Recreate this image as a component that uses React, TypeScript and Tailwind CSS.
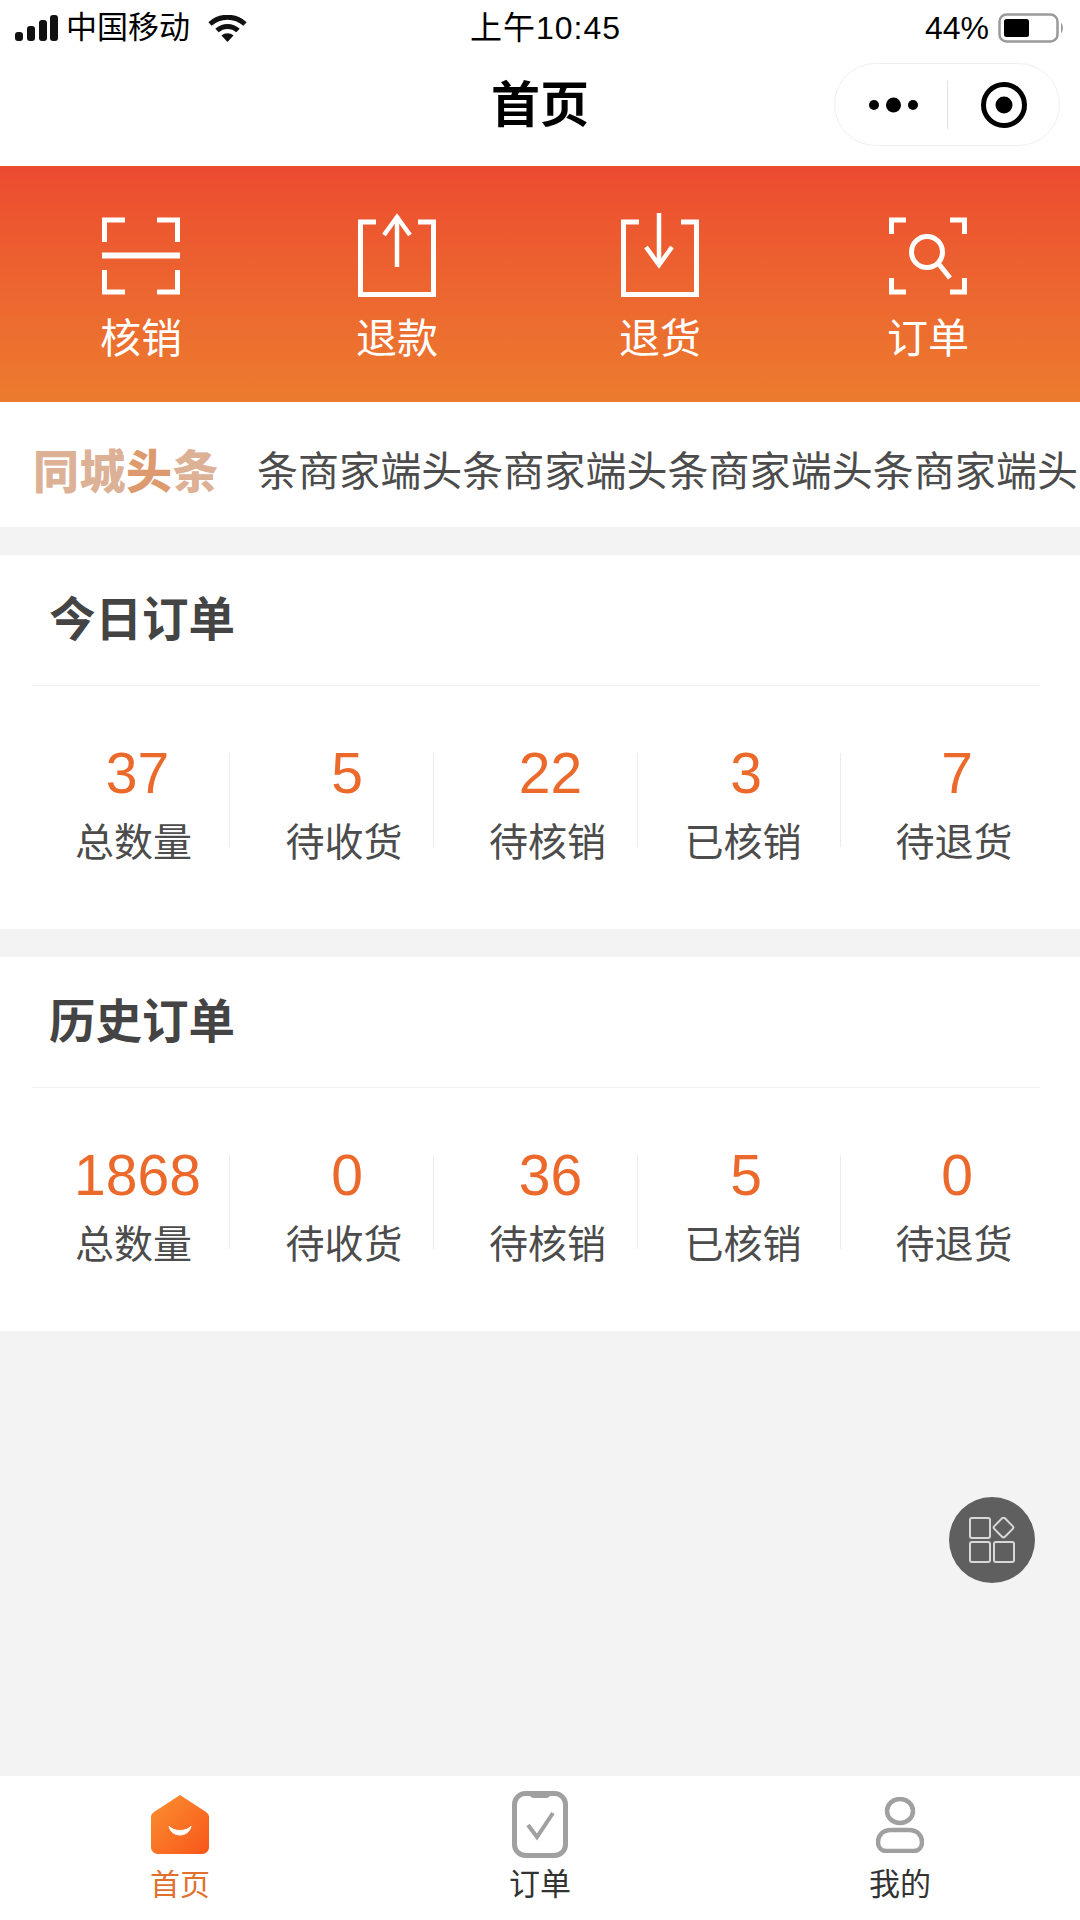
import React from "react";

const FONT = { fontFamily: '"Liberation Sans","Noto Sans CJK SC",sans-serif' };

function ScanIcon() {
  return (
    <svg className="mt-[4px]" width="78" height="78" viewBox="0 0 78 78" fill="none" stroke="#fff" strokeWidth="5">
      <path d="M23 3H2.5V25M55 3H75.5V25M23 75H2.5V53M55 75H75.5V53" />
      <path d="M0 38.5H78" strokeWidth="6" />
    </svg>
  );
}
function UploadIcon() {
  return (
    <svg width="78" height="84" viewBox="0 0 78 84" fill="none" stroke="#fff" strokeWidth="5">
      <path d="M18 9H2.5V81.5H75.5V9H60" />
      <path d="M39 54V3" strokeWidth="4.5" />
      <path d="M26 22L39 4L52 22" strokeWidth="4.5" />
    </svg>
  );
}
function DownloadIcon() {
  return (
    <svg width="78" height="84" viewBox="0 0 78 84" fill="none" stroke="#fff" strokeWidth="5">
      <path d="M18 9H2.5V81.5H75.5V9H60" />
      <path d="M38 0V52" strokeWidth="4.5" />
      <path d="M25 34L38 52L51 34" strokeWidth="4.5" />
    </svg>
  );
}
function SearchScanIcon() {
  return (
    <svg className="mt-[4px]" width="78" height="78" viewBox="0 0 78 78" fill="none" stroke="#fff" strokeWidth="5">
      <path d="M17 3H2.5V17M61 3H75.5V17M17 75H2.5V61M61 75H75.5V61" />
      <circle cx="38" cy="35" r="15.5" strokeWidth="5" />
      <path d="M49 46L61 61" strokeWidth="5" />
    </svg>
  );
}

const actions = [
  { label: "核销", icon: <ScanIcon />, cls: "ml-[102px]" },
  { label: "退款", icon: <UploadIcon />, cls: "ml-[178px]" },
  { label: "退货", icon: <DownloadIcon />, cls: "ml-[185px]" },
  { label: "订单", icon: <SearchScanIcon />, cls: "ml-[190px]" },
];

const cellCls = [
  "w-[198px] pl-[6px] border-r",
  "w-[204px] pl-[25px] border-r",
  "w-[204px] pl-[24px] border-r",
  "w-[203px] pl-[8px] border-r",
  "w-[200px] pl-[26px]",
];
const numCls = ["pl-[8px]", "pl-[6px]", "pl-[6px]", "pl-[6px]", "pl-[6px]"];

function Stats({ title, items }: { title: string; items: [string, string][] }) {
  return (
    <section className="bg-white h-[374px] pl-[32px] pr-[40px]">
      <div className="h-[131px] border-b border-[#f1f1f1] flex items-center pl-[17px]">
        <h2 className="text-[46.5px] leading-[50px] font-semibold text-[#444444]">{title}</h2>
      </div>
      <div className="flex w-[1009px] pt-[67px]">
        {items.map(([n, l], i) => (
          <div key={l + i} className={"h-[94px] shrink-0 flex flex-col items-center border-[#ececec] " + cellCls[i]}>
            <div className={"-mt-[8px] h-[56px] text-[57px] leading-[56px] text-[#ec692c] " + numCls[i]}>{n}</div>
            <div className="mt-[22px] text-[39px] leading-[40px] text-[#4c4c4c] whitespace-nowrap">{l}</div>
          </div>
        ))}
      </div>
    </section>
  );
}

export default function App() {
  return (
    <div style={FONT} className="relative w-[1080px] h-[1920px] bg-[#f3f3f3] flex flex-col overflow-hidden">
      {/* status bar */}
      <div className="bg-white h-[56px] flex items-center text-black">
        <div className="w-[470px] pl-[15px] flex items-center">
          <svg width="43" height="26" viewBox="0 0 43 26" fill="#111">
            <rect x="0" y="17" width="8" height="9" rx="3" />
            <rect x="12" y="11" width="8" height="15" rx="3" />
            <rect x="24" y="5" width="8" height="21" rx="3" />
            <rect x="35" y="0" width="8" height="26" rx="3" />
          </svg>
          <span className="ml-[8px] text-[31px] leading-[36px]">中国移动</span>
          <svg className="ml-[18px]" width="39" height="27" viewBox="0 0 39 27" fill="none" stroke="#111" strokeWidth="5">
            <path d="M2 9C12 0 27 0 37 9" />
            <path d="M9 15.5C15 10 24 10 30 15.5" />
            <path d="M19.5 27L13.5 20.5C17 17.5 22 17.5 25.5 20.5Z" fill="#111" stroke="none" />
          </svg>
        </div>
        <div className="w-[455px] text-[32px] leading-[36px] tracking-[1px]">上午10:45</div>
        <div className="text-[32px] leading-[36px]">44%</div>
        <svg className="ml-[9px]" width="66" height="30" viewBox="0 0 66 30" fill="none">
          <rect x="1.5" y="1.5" width="58" height="27" rx="7" stroke="#9a9a9a" strokeWidth="2.5" />
          <rect x="6" y="6" width="25" height="18" rx="2.5" fill="#000" />
          <path d="M63 10C65.5 11 65.5 19 63 20Z" fill="#9a9a9a" />
        </svg>
      </div>

      {/* nav */}
      <div className="bg-white h-[110px] flex items-center pb-[13px] pl-[491px]">
        <h1 className="text-[49px] leading-[50px] font-bold text-black whitespace-nowrap">首页</h1>
        <div className="ml-[245px] w-[226px] h-[83px] shrink-0 rounded-full border border-[#efefef] flex items-center">
          <svg className="ml-[34px]" width="49" height="20" viewBox="0 0 49 20" fill="#000">
            <circle cx="5" cy="10" r="5" />
            <circle cx="24.5" cy="10" r="7.5" />
            <circle cx="44" cy="10" r="5" />
          </svg>
          <div className="ml-[29px] w-px h-[48px] bg-[#e2e2e2]" />
          <svg className="ml-[33px]" width="46" height="46" viewBox="0 0 46 46" fill="none">
            <circle cx="23" cy="23" r="20.5" stroke="#000" strokeWidth="5" />
            <circle cx="23" cy="23" r="8.5" fill="#000" />
          </svg>
        </div>
      </div>

      {/* orange actions */}
      <div className="h-[236px] bg-linear-to-b from-[#ec4a30] to-[#ec7b2e] flex pt-[47px] text-white">
        {actions.map((a) => (
          <div key={a.label} className={"w-[78px] flex flex-col items-center " + a.cls}>
            <div className="h-[84px] flex items-start">{a.icon}</div>
            <div className="mt-[20px] text-[41px] leading-[44px] whitespace-nowrap">{a.label}</div>
          </div>
        ))}
      </div>

      {/* notice */}
      <div className="bg-white h-[125px] flex items-center overflow-hidden whitespace-nowrap pl-[33px] pt-[14px]">
        <div className="text-[46px] leading-[50px] font-black text-[#dcb196] tracking-[0.5px] shrink-0">
          同城<span className="text-[#dd9a6e]">头</span>条
        </div>
        <div className="ml-[38px] text-[41px] leading-[46px] tracking-[0.05px] text-[#4c4c4c]">
          条商家端头条商家端头条商家端头条商家端头
        </div>
      </div>

      <div className="mt-[28px]">
        <Stats
          title="今日订单"
          items={[["37", "总数量"], ["5", "待收货"], ["22", "待核销"], ["3", "已核销"], ["7", "待退货"]]}
        />
      </div>
      <div className="mt-[28px]">
        <Stats
          title="历史订单"
          items={[["1868", "总数量"], ["0", "待收货"], ["36", "待核销"], ["5", "已核销"], ["0", "待退货"]]}
        />
      </div>

      {/* tab bar */}
      <nav className="mt-auto bg-white h-[144px] flex items-start">
        <div className="w-[360px] flex flex-col items-center">
          <svg className="mt-[19px]" width="58" height="59" viewBox="0 0 58 59">
            <defs>
              <linearGradient id="homeGrad" x1="0" y1="0" x2="1" y2="1">
                <stop offset="0" stopColor="#fb9030" />
                <stop offset="1" stopColor="#f8561a" />
              </linearGradient>
            </defs>
            <path d="M29 0L55 17C57 18.5 58 20 58 22V52C58 56 55 59 51 59H7C3 59 0 56 0 52V22C0 20 1 18.5 3 17Z" fill="url(#homeGrad)" />
            <path d="M18 31C20 43 38 43 40 31C36 37 22 37 18 31Z" fill="#fff" stroke="#fff" strokeWidth="1" strokeLinejoin="round" />
          </svg>
          <span className="mt-[16px] text-[30px] leading-[30px] text-[#e0702f]">首页</span>
        </div>
        <div className="w-[360px] flex flex-col items-center">
          <svg className="mt-[15px]" width="56" height="67" viewBox="0 0 56 67" fill="none" stroke="#a0a0a0">
            <rect x="2.5" y="2.5" width="51" height="62" rx="11" strokeWidth="5" />
            <path d="M18 2H38V4C38 6 36 7 34 7H22C20 7 18 6 18 4Z" fill="#a0a0a0" stroke="none" />
            <path d="M16 34L25 46L41 22" strokeWidth="4" />
          </svg>
          <span className="mt-[11px] text-[31px] leading-[32px] text-[#333333]">订单</span>
        </div>
        <div className="w-[360px] flex flex-col items-center">
          <svg className="mt-[21px]" width="48" height="56" viewBox="0 0 48 56" fill="none" stroke="#a0a0a0" strokeWidth="4.5">
            <ellipse cx="24" cy="14" rx="13" ry="12" />
            <path d="M15 33H33C41 33 46 38 46 45C46 50 43 54 38 54H10C5 54 2 50 2 45C2 38 7 33 15 33Z" />
          </svg>
          <span className="mt-[16px] text-[31px] leading-[32px] text-[#333333]">我的</span>
        </div>
      </nav>

      {/* floating button */}
      <button className="absolute left-[949px] top-[1497px] w-[86px] h-[86px] rounded-full bg-[#5f5f5f] flex items-center justify-center">
        <svg width="46" height="46" viewBox="0 0 46 46" fill="none" stroke="#d8d8d8" strokeWidth="2">
          <rect x="1" y="1" width="20" height="20" rx="2" />
          <rect x="1" y="25" width="20" height="20" rx="2" />
          <rect x="25" y="25" width="20" height="20" rx="2" />
          <rect x="27" y="3" width="15" height="15" rx="2" transform="rotate(45 34.5 10.5)" />
        </svg>
      </button>
    </div>
  );
}
